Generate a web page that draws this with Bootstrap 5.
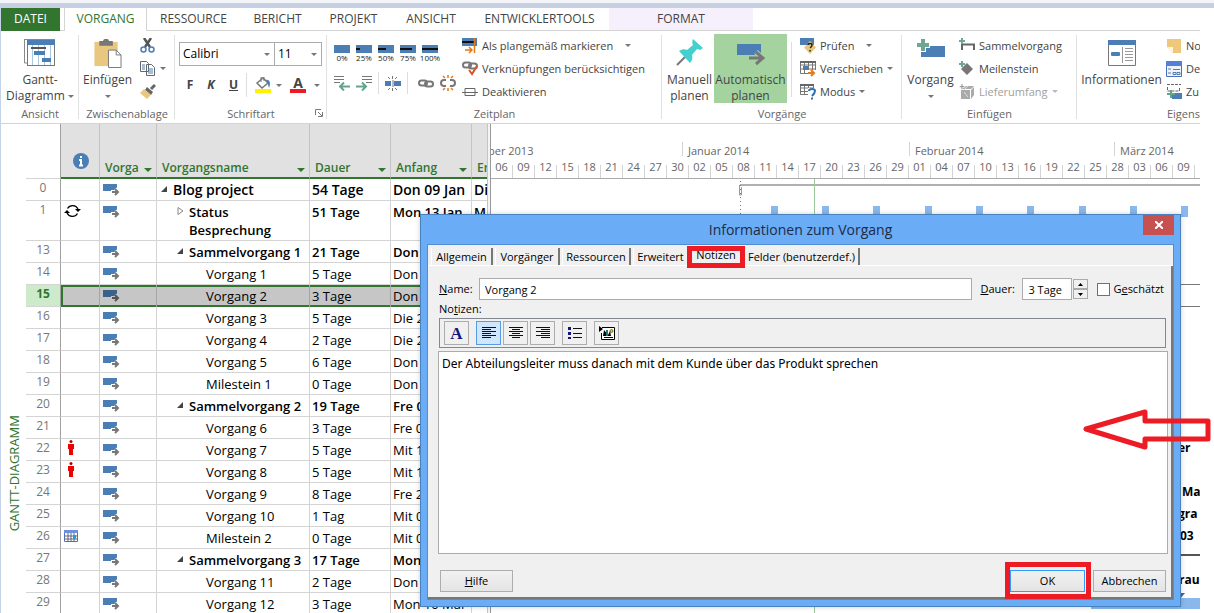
<!DOCTYPE html>
<html lang="de">
<head>
<meta charset="utf-8">
<meta name="viewport" content="width=device-width, initial-scale=1">
<title>Informationen zum Vorgang</title>
<link href="https://cdn.jsdelivr.net/npm/bootstrap@5.3.0/dist/css/bootstrap.min.css" rel="stylesheet">
<style>
:root{--ui:"Open Sans","Noto Sans",sans-serif;--green:#31752f;--blue:#4a7eb5;--line:#d4d4d4;--red:#ed1c24}
body{font-family:var(--ui);font-size:12px;line-height:16px;color:#444;background:#fff;height:100vh;overflow:hidden}
button,input,select,textarea{font-family:inherit;font-size:inherit;line-height:inherit;color:inherit}
button{background:none;border:0;padding:0;white-space:nowrap}
svg{display:block;flex:none}
a{color:inherit;text-decoration:none}
.topstrip{height:8px;background:#c7d0e2;border-top:3px solid #f3f5f8}
.app{margin-right:14px;border-left:1px solid #c5d3ea;min-height:0}
.tabbar{display:grid;grid-template-columns:59px 87px 93px 75px 77px 78px 139px 144px;height:23px;box-shadow:inset 0 -1px #d4d4d4}
.tabbar a{display:flex;align-items:center;justify-content:center;white-space:nowrap;padding-bottom:1px}
.tabbar .t-file{background:var(--green);color:#fff}
.tabbar .t-on{margin-left:4px;color:var(--green);background:#fff;border:1px solid var(--line);border-width:0 1px}
.tabbar .t-ctx{background:#f6f0fc;margin-bottom:1px}
.ribbon{display:grid;grid-template-columns:78px 96px 152px 335px 240px 175px minmax(0,1fr);height:93px;border-bottom:1px solid var(--line);overflow:hidden}
.grp{display:flex;flex-direction:column;position:relative;padding-top:3px;min-width:0;overflow:hidden}
.grp::after{content:"";position:absolute;right:0;top:4px;bottom:4px;width:1px;background:#e1e1e1}
.grp:last-child::after{display:none}
.grp-body{display:flex;height:73px}
.grp-name{text-align:center;color:#666;white-space:nowrap;font-size:11px;line-height:18px}
.bigbtn{display:flex;flex-direction:column;align-items:center;height:69px;padding-top:5px}
.bigbtn svg.pic{margin-bottom:6px}
.bigbtn .lbl{display:block;text-align:center;line-height:16px}
.car{display:inline-block;border:3px solid transparent;border-top-color:#777;border-bottom:0;vertical-align:middle}
.bigbtn .solo{margin-top:7px}
.linebtn{display:flex;align-items:center;gap:4px;height:23px;font-size:11px}
.linebtn .car{margin-left:5px}
.dis{color:#a0a0a0}
.vsep{width:1px;background:#ddd}
.fontbox{display:grid;border:1px solid #ababab;height:24px;background:#fff}
.fontbox>*{grid-area:1/1}
.fontbox select{appearance:none;border:0;background:none;padding:0 3px;color:#000;width:100%}
.fontbox .car{align-self:center;justify-self:end;margin-right:4px}
.pct{font-size:8px;line-height:10px;width:16px;display:flex;flex-direction:column;align-items:center;color:#222}
.side{width:25px;flex:none}
.side span{writing-mode:vertical-rl;transform:rotate(180deg);color:var(--green);margin-bottom:82px;font-size:13px}
.plan{width:461px;flex:none;overflow:hidden}
.plan table{table-layout:fixed;width:526px;border-collapse:separate;border-spacing:0;color:#000;font-size:13px;line-height:18px}
.plan th,.plan td{padding:0 0 0 2px;overflow:hidden;white-space:nowrap;vertical-align:top}
.plan thead th{height:55px;vertical-align:bottom;background:#e1e1e1;border-right:1px solid #c4c4c4;border-bottom:2px solid var(--green);color:var(--green);font-size:12px;font-weight:600;padding:0 4px 0 5px}
.plan thead th:first-child{background:#fff;border-right-color:#a0a0a0;border-bottom:1px solid var(--line)}
.plan thead .car{border-width:4px 4px 0;border-top-color:var(--green);margin-bottom:-4px}
.plan tbody td,.plan tbody th{height:22px;border-right:1px solid var(--line);border-bottom:1px solid var(--line);padding-top:2px}
.plan tbody th{font-weight:400;font-size:12px;color:#777;text-align:center;padding:0;border-right-color:#a0a0a0}
.plan td:nth-child(2),.plan td:nth-child(3){padding-left:3px}
.plan .r-first td{font-size:14px}
.plan .r-tall td,.plan .r-tall th{height:40px;white-space:normal}
.plan .r-sum td{font-weight:600}
.plan .l0{padding-left:4px}
.plan .s1{padding-left:20px}
.plan .s2{padding-left:49px}
.plan .r-sel td{background:#c6c6c6;border-right-color:#a5a5a5;box-shadow:inset 0 2px var(--green),inset 0 -2px var(--green);border-bottom:0}
.plan .r-sel td:nth-child(2){box-shadow:inset 2px 2px var(--green),inset 0 -2px var(--green)}
.plan .r-sel th{background:#cdebcb;color:var(--green);font-weight:700}
.tri{display:inline-block!important;margin-right:5px;vertical-align:2px}
.split{width:4px;flex:none;border-left:1px solid #c4c4c4;border-right:1px solid #999;background:#f4f4f4}
.gantt{position:relative;overflow:hidden;color:#666}
.scale{border-bottom:1px solid #aaa;height:55px;padding-top:18px;overflow:hidden;font-size:11px}
.months{display:grid;grid-template-columns:191px 227px 205px 1fr;height:23px;white-space:nowrap}
.months span{border-left:1px solid var(--line);padding-left:5px;line-height:18px;height:14px}
.months span:first-child{padding:0;border:0;margin-left:-3px}
.days{display:grid;grid-template-columns:repeat(33,22px);height:14px}
.days span{border-right:1px solid var(--line);text-align:center;line-height:4px;height:14px}
.canvas{position:absolute;inset:55px 0 0 0}
.dlg{position:absolute;left:420px;right:33px;top:214px;bottom:6px;background:#6bacf7;border:1px solid #4a82bd;padding:0 6px 6px;color:#000;box-shadow:0 0 5px #0003;font-size:11px}
.dlg-title{height:29px;padding-top:1px;font-size:14px;color:#1d2b45}
.dlg-close{position:absolute;right:6px;top:0;width:31px;height:20px;background:#c75050;color:#fff;display:grid;place-items:center}
.dlg-in{background:#f0f0f0;border:1px solid #4f8dd6;min-height:0}
.dtabs{height:21px;padding:3px 0 0 3px;border-bottom:1px solid #fff}
.dtabs button{height:17px;border-left:1px solid #fff;border-right:2px solid #777;text-align:center;padding-top:1px;line-height:14px}
.dtabs .g{margin-left:2px}
.mark-tab{border:5px solid var(--red)!important;height:22px!important;width:58px;margin-top:-2px;z-index:2;padding:0!important;line-height:8px!important;display:flex;justify-content:center}
.dbody{border-right:2px solid #777;border-bottom:2px solid #777;min-height:0;padding:12px 3px 0 11px}
.tb{height:22px;border:1px solid #ababab;background:#fff;padding:0 5px;border-radius:0;min-width:0}
.spin{display:grid;width:15px;height:20px;grid-template-rows:10px 10px}
.spin button{border:1px solid #aaa;display:grid;place-items:center}
.cb{appearance:none;width:13px;height:13px;border:1px solid #707070;background:#fff}
.tools{height:30px;border:1px solid #828790;padding:2px 4px;margin-right:2px}
.tools button{width:25px;height:24px;border:1px solid #adadad;display:grid;place-items:center;background:#f0f0f0}
.tools .on{background:#cfe6fc;border-color:#569de5}
.tools .nextset{margin-left:5px}
.memo{resize:none;border:1px solid #ababab;padding:4px 3px;font-family:"Noto Sans",sans-serif;font-size:12px;line-height:16px;border-radius:0;margin:3px 0 0 -1px;color:#000;display:block}
.pb{width:73px;height:22px;border:1px solid #adadad;background:linear-gradient(#f1f1f1,#e4e4e4)}
.pb.def{border-color:#3399ff;width:75px}
.mark-ok{border:5px solid var(--red);width:86px;height:37px;padding-top:3px;margin:-1px 2px -2px 0}
.below{margin-top:7px}
.arrow{position:absolute;right:3px;top:408px}
</style>
</head>
<body class="d-flex flex-column position-relative">
<svg width="0" height="0" class="position-absolute" aria-hidden="true">
 <symbol id="task" viewBox="0 0 17 12"><path fill="#4a7eb5" d="M0 0h14v7H0z"/><path d="M8 8h7M12 5l3 3-3 3" fill="none" stroke="#fff" stroke-width="4"/><path d="M9 8h6M12 5l3 3-3 3" fill="none" stroke="#777" stroke-width="2"/></symbol>
 <symbol id="tasksel" viewBox="0 0 17 12"><path fill="#3a628c" d="M0 0h14v7H0z"/><path d="M8 8h7M12 5l3 3-3 3" fill="none" stroke="#c6c6c6" stroke-width="4"/><path d="M9 8h6M12 5l3 3-3 3" fill="none" stroke="#555" stroke-width="2"/></symbol>
 <symbol id="open" viewBox="0 0 7 7"><path d="M6 0v6H0z" fill="#444"/></symbol>
 <symbol id="man" viewBox="0 0 6 15"><circle cx="3" cy="1.500" r="1.500" fill="#a00"/><path fill="#e00" d="M0 4h6v5H5v6H1V9H0z"/></symbol>
 <symbol id="lnk" viewBox="0 0 16 9"><g fill="none" stroke="#777" stroke-width="2"><rect x="1" y="1.500" width="8" height="5" rx="2.500"/><rect x="7" y="2.500" width="8" height="5" rx="2.500"/></g></symbol>
</svg>
<div class="topstrip flex-shrink-0"></div>
<div class="app d-flex flex-column flex-grow-1">
<nav class="tabbar flex-shrink-0" aria-label="Menüband">
 <a class="t-file" href="#">DATEI</a><a class="t-on" href="#">VORGANG</a><a href="#">RESSOURCE</a><a href="#">BERICHT</a><a href="#">PROJEKT</a><a href="#">ANSICHT</a><a href="#">ENTWICKLERTOOLS</a><a class="t-ctx" href="#">FORMAT</a>
</nav>
<div class="ribbon flex-shrink-0">
 <section class="grp">
  <div class="grp-body justify-content-center">
   <button class="bigbtn"><svg class="pic" width="31" height="27" viewBox="0 0 31 27"><path d="M.5 24V.5M0 .5h31M.5 24h3" stroke="#888" fill="none"/><rect x="3.500" y="1.500" width="27" height="25" fill="#fff" stroke="#777"/><path fill="#4a7eb5" d="M3 1h28v5H3z"/><path d="M8.500 6v20M14.500 6v20M20.500 6v20M26.500 6v20" stroke="#a9c8e4"/><path d="M7 9h15" stroke="#555" stroke-width="2"/><path fill="#4a7eb5" d="M10 12h11v4H10zM18 19h9v4h-9z"/></svg><span class="lbl">Gantt-<br>Diagramm <i class="car"></i></span></button>
  </div><div class="grp-name">Ansicht</div>
 </section>
 <section class="grp">
  <div class="grp-body ps-1">
   <button class="bigbtn"><svg class="pic mb-1" width="29" height="29" viewBox="0 0 29 30"><path fill="#eac77f" d="M1 3h24v25H1z"/><path fill="#777" d="M6 2h4c0-3 6-3 6 0h4v5H6z"/><path d="M15.500 11.500h8l5 5v13h-13z" fill="#fff" stroke="#777"/><path d="M23.500 11.500v5h5" fill="none" stroke="#777"/></svg><span class="lbl">Einfügen</span><i class="car solo"></i></button>
   <div class="d-flex flex-column gap-2 ps-1 pt-1 ms-1">
    <button aria-label="Ausschneiden"><svg width="16" height="15" viewBox="0 0 16 15"><path d="M4 0l6 9M11 0L5 9" stroke="#555" stroke-width="2.500"/><g fill="none" stroke="#4a7eb5" stroke-width="1.500"><circle cx="3.500" cy="11.500" r="2.500"/><circle cx="11.500" cy="11.500" r="2.500"/></g></svg></button>
    <button class="d-flex align-items-center gap-1" aria-label="Kopieren"><svg width="16" height="15" viewBox="0 0 16 15"><path d="M.5.500h6l2 2v8h-8zM6.500 3.500h5l3 3v8h-8z" fill="#fff" stroke="#666"/><path d="M2 4h3M2 6h3M2 8h3M8 8h5M8 10h5M8 12h5" stroke="#4a7eb5"/></svg><i class="car"></i></button>
    <button aria-label="Format übertragen"><svg width="16" height="15" viewBox="0 0 16 15"><path d="M15 1l-4 4" stroke="#666" stroke-width="3"/><path d="M7 3l6 5-2 3-6-5z" fill="#666"/><path d="M4 5l7 6-4 4-7-6z" fill="#eac77f"/></svg></button>
   </div>
  </div><div class="grp-name">Zwischenablage</div>
 </section>
 <section class="grp">
  <div class="grp-body flex-column ps-1">
   <div class="d-flex pt-2"><label class="fontbox" style="width:96px"><select aria-label="Schriftart"><option>Calibri</option></select><i class="car"></i></label><label class="fontbox border-start-0" style="width:47px"><select aria-label="Schriftgrad"><option>11</option></select><i class="car"></i></label></div>
   <div class="d-flex align-items-center" style="margin-top:7px;height:24px">
    <button class="fw-bold" style="width:22px">F</button><button class="fw-bold fst-italic" style="width:20px">K</button><button class="fw-bold text-decoration-underline" style="width:25px">U</button><span class="vsep h-100"></span>
    <button class="d-flex align-items-center gap-1 ms-2" aria-label="Füllfarbe"><svg width="17" height="16" viewBox="0 0 17 16"><path fill="#fff200" d="M0 12h16v4H0z"/><path d="M2 6l6-5 5 5-6 5z" fill="#fff" stroke="#777" stroke-width="1.500"/><path d="M6 5V0h3v4" fill="none" stroke="#777"/><path d="M11 3c4-1 5 4 3 8-1-3-1-5-3-8z" fill="#4a7eb5"/></svg><i class="car"></i></button>
    <button class="d-flex align-items-center gap-1 ms-2"><span class="fw-bold text-center" style="width:16px;border-bottom:4px solid #ed1c24;line-height:12px;font-size:14px">A</span><i class="car ms-1"></i></button>
   </div>
  </div><div class="grp-name d-flex justify-content-center">Schriftart<svg class="position-absolute end-0 me-1 mt-1" width="8" height="8"><path d="M.5 6V.5H6M3 3l4 4M7.500 3v4.500H3" fill="none" stroke="#777"/></svg></div>
 </section>
 <section class="grp">
  <div class="grp-body" style="padding-left:7px;gap:6px">
   <div style="width:122px">
    <div class="d-flex" style="gap:6px;padding-top:11px">
     <button class="pct"><svg width="16" height="8"><path fill="#4a7eb5" d="M0 0h16v8H0z"/></svg>0%</button>
     <button class="pct"><svg width="16" height="8"><path fill="#4a7eb5" d="M0 0h16v8H0z"/><path fill="#111" d="M0 3h4v2H0z"/></svg>25%</button>
     <button class="pct"><svg width="16" height="8"><path fill="#4a7eb5" d="M0 0h16v8H0z"/><path fill="#111" d="M0 3h8v2H0z"/></svg>50%</button>
     <button class="pct"><svg width="16" height="8"><path fill="#4a7eb5" d="M0 0h16v8H0z"/><path fill="#111" d="M0 3h12v2H0z"/></svg>75%</button>
     <button class="pct"><svg width="16" height="8"><path fill="#4a7eb5" d="M0 0h16v8H0z"/><path fill="#111" d="M0 3h16v2H0z"/></svg>100%</button>
    </div>
    <div class="d-flex align-items-center" style="margin-top:9px;height:22px;gap:6px">
     <button aria-label="Ausrücken"><svg width="16" height="16"><path d="M0 1.500h10M0 4.500h10M0 7.500h6" stroke="#777"/><path d="M16 11.500H6M10 7.500l-4 4 4 4" fill="none" stroke="#62a58b" stroke-width="2"/></svg></button>
     <button aria-label="Einrücken"><svg width="16" height="16"><path d="M6 1.500h10M6 4.500h10M10 7.500h6" stroke="#777"/><path d="M0 11.500h10M6 7.500l4 4-4 4" fill="none" stroke="#62a58b" stroke-width="2"/></svg></button>
     <span class="vsep h-100"></span>
     <button aria-label="Unterbrechen"><svg width="16" height="15"><path fill="#4a7eb5" d="M0 5h6v5H0zM9 5h7v5H9z"/><path d="M8 4v7M7.500 0v3M7.500 12v3M3 1l2 2M12 1l-2 2M3 14l2-2M12 14l-2-2" stroke="#777"/></svg></button>
     <span class="vsep h-100"></span>
     <button class="ms-1" aria-label="Verknüpfen"><svg width="16" height="9"><use href="#lnk"/></svg></button>
     <button aria-label="Verknüpfung aufheben"><svg width="16" height="16"><path d="M6 5H4Q1 5 1 8t3 3h2M10 5h2q3 0 3 3t-3 3h-2" fill="none" stroke="#777" stroke-width="2"/><path d="M8 0v3M8 13v3M3 1l2 2M13 1l-2 2M3 15l2-2M13 15l-2-2" stroke="#e67817" stroke-width="1.500"/></svg></button>
    </div>
   </div>
   <div>
    <button class="linebtn"><svg width="16" height="16"><path fill="#4a7eb5" d="M0 0h15v8H0z"/><path d="M0 4h12" stroke="#111" stroke-width="2"/><path d="M12.500 0v15M3 12h7M7 9l3 3-3 3" fill="none" stroke="#e67817" stroke-width="1.500"/></svg>Als plangemäß markieren <i class="car ms-2"></i></button>
    <button class="linebtn"><svg width="16" height="16"><use href="#lnk" width="16" height="9"/><path d="M7 9l3 4 5-8" fill="none" stroke="#d8532a" stroke-width="2"/></svg>Verknüpfungen berücksichtigen</button>
    <button class="linebtn"><svg width="16" height="16"><path d="M0 8.500h16M3 4.500h10v7H3z" fill="none" stroke="#666"/></svg>Deaktivieren</button>
   </div>
  </div><div class="grp-name">Zeitplan</div>
 </section>
 <section class="grp">
  <div class="grp-body">
   <button class="bigbtn" style="width:52px;padding-left:3px"><svg class="pic" width="28" height="27" viewBox="0 0 28 27"><path d="M1 26l9-9" stroke="#777" stroke-width="2"/><path fill="#45d0d0" d="M17 0l10 9-3 2-3-1-5 6c1 3 0 6-2 8L3 12c3-2 6-2 8-1l6-5c-1-2-1-4 0-6z"/></svg><span class="lbl">Manuell<br>planen</span></button>
   <button class="bigbtn" style="width:73px;background:#a5d3a0"><svg class="pic" width="28" height="27" viewBox="0 0 28 27"><path fill="#4a7eb5" d="M0 5h24v11H0z"/><path d="M12 19h14M19 13l7 6-7 6" fill="none" stroke="#a5d3a0" stroke-width="5"/><path d="M12 19h14M19 13l7 6-7 6" fill="none" stroke="#777" stroke-width="3"/></svg><span class="lbl">Automatisch<br>planen</span></button>
   <span class="vsep ms-1 me-2 mt-2 mb-2"></span>
   <div>
    <button class="linebtn"><svg width="16" height="16"><path fill="#4a7eb5" d="M0 0h14v7H0z"/><path fill="#eac77f" d="M10 3l6 6.500-6 6.500-6-6.500z"/><path d="M8 7q0-1.500 2-1.500t2 1.500-2 3M10 12v1.500" fill="none" stroke="#222" stroke-width="1.500"/></svg>Prüfen <i class="car ms-2"></i></button>
    <button class="linebtn"><svg width="16" height="16"><path d="M.5.500h15v12H.5zM.5 4h15M.5 8h15M4.500 1v12M8.500 1v12M12.500 1v12" fill="none" stroke="#777"/><path d="M0 1h16" stroke="#666" stroke-width="2"/><path fill="#4a7eb5" d="M3 5h5v4H3z"/><path fill="#fff" d="M8 9h8v7H8z"/><path d="M8 12h6M11 9l3 3-3 3" fill="none" stroke="#e67817" stroke-width="2"/></svg>Verschieben<i class="car ms-0"></i></button>
    <button class="linebtn"><svg width="16" height="16"><path d="M.5.500h13v10H.5zM.5 4h13M.5 7.500h13M4.500 1v10M8.500 1v10" fill="none" stroke="#777"/><path d="M0 1h14" stroke="#666" stroke-width="2"/><path fill="#fff" d="M8 4h8v12H8z"/><path d="M9 7q0-2 3-2t3 2-3 5M12 13.500v2" fill="none" stroke="#2f6eb0" stroke-width="2"/></svg>Modus<i class="car ms-0"></i></button>
   </div>
  </div><div class="grp-name">Vorgänge</div>
 </section>
 <section class="grp">
  <div class="grp-body">
   <button class="bigbtn" style="width:57px"><svg class="pic" width="28" height="27" viewBox="0 0 28 27"><path fill="#4a7eb5" d="M4 7h24v11H4z"/><path d="M6 0v13M0 6h13" stroke="#fff" stroke-width="6"/><path d="M6 0v12M0 6h12" stroke="#6fa792" stroke-width="4"/></svg><span class="lbl">Vorgang</span><i class="car solo"></i></button>
   <div>
    <button class="linebtn"><svg width="16" height="16"><path d="M3 12V6.500h12V12" fill="none" stroke="#666" stroke-width="2"/><path d="M3 0v6M0 3h6" stroke="#6fa792" stroke-width="2"/></svg>Sammelvorgang</button>
    <button class="linebtn"><svg width="16" height="16"><path fill="#777" d="M8 2l6 6-6 6-6-6z"/><path d="M3 0v6M0 3h6" stroke="#6fa792" stroke-width="2"/></svg>Meilenstein</button>
    <button class="linebtn dis"><svg width="16" height="16"><path fill="#aaa" d="M2 6h9v9H2zM3 5l4-3h8l-3 3zM12 6l3-3v8l-3 4z"/><path d="M5 6l4-4M5 8l4 5M3 0v6M0 3h6" stroke="#ddd"/><path d="M3 0v5M1 2.500h4" stroke="#999"/></svg>Lieferumfang<i class="car ms-0 opacity-50"></i></button>
   </div>
  </div><div class="grp-name">Einfügen</div>
 </section>
 <section class="grp">
  <div class="grp-body">
   <button class="bigbtn flex-shrink-0" style="width:89px"><svg class="pic" width="28" height="27" viewBox="0 0 28 27"><path d="M.5 1.500h27v25H.5z" fill="#fff" stroke="#777"/><path fill="#4a7eb5" d="M0 1h28v5H0z"/><rect x="3" y="13" width="9" height="4" rx="1" fill="#4a7eb5"/><path d="M14.500 8v16M17 9.500h8M17 12.500h8M17 15.500h8M17 18.500h8M17 21.500h8" stroke="#999"/></svg><span class="lbl">Informationen</span></button>
   <div>
    <button class="linebtn"><svg width="16" height="16"><path fill="#eec97c" d="M1 1h14v14H7l-6-6z"/><path d="M1 9h6v6" fill="#fff5de"/></svg>No</button>
    <button class="linebtn"><svg width="16" height="16"><path d="M.5.500h15v15H.5z" fill="#eef3fb" stroke="#4a6fc0"/><path fill="#5680d8" d="M0 0h16v5H0z"/><path d="M2 8h3M2 12h3M7 8.500h7M7 11.500h3v2H7zM11 11.500h3v2h-3z" stroke="#5b79a8" fill="none"/></svg>Det</button>
    <button class="linebtn"><svg width="16" height="16"><path d="M1 .500h14M1.500 3v4h12V3" fill="none" stroke="#666" stroke-dasharray="3 1"/><path fill="#4a7eb5" d="M6 9h10v6H6z"/><path d="M5 6v8M1 10h8" stroke="#62a58b" stroke-width="2"/></svg>Zu</button>
   </div>
  </div><div class="grp-name text-end">Eigens</div>
 </section>
</div>
<main class="d-flex flex-grow-1 overflow-hidden" style="min-height:0">
 <div class="side d-flex align-items-end justify-content-center"><span>GANTT-DIAGRAMM</span></div>
 <div class="plan">
 <table>
  <colgroup><col style="width:35px"><col style="width:39px"><col style="width:57px"><col style="width:153px"><col style="width:81px"><col style="width:81px"><col style="width:80px"></colgroup>
  <thead><tr><th></th><th><svg class="mx-auto mb-2" width="16" height="16"><circle cx="8" cy="8" r="8" fill="#4a7eb5"/><path d="M8 3v2M6 7h2v5M6 12.500h4" stroke="#fff" stroke-width="2" fill="none"/></svg></th><th><div class="d-flex justify-content-between align-items-center">Vorga<i class="car"></i></div></th><th><div class="d-flex justify-content-between align-items-center">Vorgangsname<i class="car"></i></div></th><th><div class="d-flex justify-content-between align-items-center">Dauer<i class="car"></i></div></th><th><div class="d-flex justify-content-between align-items-center">Anfang<i class="car"></i></div></th><th>En</th></tr></thead>
  <tbody id="rows"></tbody>
 </table>
 </div>
 <div class="split"></div>
 <div class="gantt flex-grow-1">
  <div class="scale"><div class="months"><span>ber 2013</span><span>Januar 2014</span><span>Februar 2014</span><span>März 2014</span></div><div class="days" id="days"></div></div>
  <svg class="canvas" width="100%" height="440" font-family="Open Sans, Noto Sans, sans-serif" font-size="12" font-weight="700">
   <path d="M249 6h460" stroke="#b0b0b0" stroke-width="2"/><path d="M248.500 6v10h2V8" fill="none" stroke="#999"/><path d="M249.500 2v34" stroke="#777" stroke-dasharray="1 3"/>
   <path d="M323.500 0v434" stroke="#9cc79a"/>
   <g fill="#8ab8ec" id="marks"></g>
   <path d="M600 105.500h109M600 127.500h109" stroke="#777"/><path d="M600 376h109" stroke="#555" stroke-width="2"/>
   <g fill="#000"><text x="687" y="273">er</text><text x="691" y="317">Ma</text><text x="687" y="339">gra</text><text x="689" y="361">03</text><text x="688" y="405">rau</text></g>
   <path fill="#2f6eb0" d="M689 414h5l-5 6z"/><path fill="#8ab8ec" d="M600 419h110v11H600z"/>
  </svg>
 </div>
</main>
</div>

<div class="dlg d-flex flex-column" role="dialog" aria-label="Informationen zum Vorgang">
 <div class="dlg-title d-flex justify-content-center align-items-center flex-shrink-0">Informationen zum Vorgang</div>
 <button class="dlg-close" aria-label="Schließen"><svg width="8" height="8"><path d="M0 0l8 8M8 0L0 8" stroke="#fff" stroke-width="2"/></svg></button>
 <div class="dlg-in d-flex flex-column flex-grow-1">
  <div class="dtabs d-flex flex-shrink-0"><button style="width:62px">Allgemein</button><button class="g" style="width:65px">Vorgänger</button><button class="g" style="width:69px">Ressourcen</button><button class="g border-end-0" style="width:54px">Erweitert</button><button class="mark-tab">Notizen</button><button class="border-start-0" style="width:115px">Felder (benutzerdef.)</button></div>
  <div class="dbody d-flex flex-column flex-grow-1">
   <div class="d-flex align-items-center" style="margin-right:4px"><label for="nm" style="width:40px"><u>N</u>ame:</label><input id="nm" class="tb flex-grow-1" value="Vorgang 2"><label for="du" style="width:50px;padding-left:8px"><u>D</u>auer:</label><input id="du" class="tb" style="width:50px" value="3 Tage"><span class="spin" style="margin-left:1px"><button aria-label="Mehr"><svg width="5" height="3"><path d="M0 3l2.500-3L5 3z"/></svg></button><button aria-label="Weniger"><svg width="5" height="3"><path d="M0 0l2.500 3L5 0z"/></svg></button></span><input type="checkbox" id="ge" class="cb" style="margin:0 3px 0 9px"><label for="ge">G<u>e</u>schätzt</label></div>
   <label for="memo" style="height:18px;line-height:18px">No<u>t</u>izen:</label>
   <div class="tools d-flex flex-shrink-0" style="gap:2px">
    <button aria-label="Zeichenformat" style="font:bold 17px/17px 'Liberation Serif',serif;color:#15157a">A</button>
    <button class="on nextset" aria-label="Linksbündig"><svg width="14" height="12"><path d="M0 .500h14M0 2.500h9M0 4.500h14M0 6.500h9M0 8.500h14M0 10.500h9" stroke="#111"/></svg></button>
    <button aria-label="Zentriert"><svg width="14" height="12"><path d="M0 .500h14M3 2.500h8M0 4.500h14M3 6.500h8M0 8.500h14M3 10.500h8" stroke="#111"/></svg></button>
    <button aria-label="Rechtsbündig"><svg width="14" height="12"><path d="M0 .500h14M5 2.500h9M0 4.500h14M5 6.500h9M0 8.500h14M5 10.500h9" stroke="#111"/></svg></button>
    <button class="nextset" aria-label="Aufzählung"><svg width="14" height="12"><path fill="#15157a" d="M0 0h3v3H0zM0 5h3v3H0zM0 10h3v3H0z"/><path d="M5 1.500h9M5 6.500h9M5 10.500h9" stroke="#111"/></svg></button>
    <button class="nextset" aria-label="Objekt einfügen"><svg width="16" height="14"><path d="M3 1.500h12.500v12H2.500V7" fill="#fff" stroke="#000"/><path d="M0 0l4 3-4 3z"/><path d="M5 4l4 5 2-4 1 5H4zM5 11h9v1H5z"/><circle cx="12.500" cy="5" r="1.500" fill="#dd0" stroke="#000" stroke-width=".5"/><path fill="#277" d="M7 4h2v6H7z"/></svg></button>
   </div>
   <textarea id="memo" class="memo flex-grow-1" spellcheck="false">Der Abteilungsleiter muss danach mit dem Kunde über das Produkt sprechen</textarea>
   <div class="d-flex align-items-start flex-shrink-0" style="padding:9px 2px 0 1px"><button class="pb me-auto below"><u>H</u>ilfe</button><div class="mark-ok"><button class="pb def">OK</button></div><button class="pb below">Abbrechen</button></div>
  </div>
 </div>
</div>
<svg class="arrow" width="128" height="42" viewBox="0 0 128 42"><path d="M3 21L62 4v9h63v18H62v8z" fill="none" stroke="#ed1c24" stroke-width="5" stroke-linejoin="round"/></svg>
<script>
// id, indicator icon, name, duration, start, finish, row class, outline level
const tasks=[
[0,'','Blog project','54 Tage','Don 09 Jan','Di','r-first r-sum',0],
[1,'rep','Status Besprechung','51 Tage','Mon 13 Jan','M','r-tall r-sum',1],
[13,'','Sammelvorgang 1','21 Tage','Don','','r-sum',1],
[14,'','Vorgang 1','5 Tage','Don','','',2],
[15,'','Vorgang 2','3 Tage','Don','','r-sel',2],
[16,'','Vorgang 3','5 Tage','Die 2','','',2],
[17,'','Vorgang 4','2 Tage','Die 2','','',2],
[18,'','Vorgang 5','6 Tage','Don','','',2],
[19,'','Milestein 1','0 Tage','Don','','',2],
[20,'','Sammelvorgang 2','19 Tage','Fre 0','','r-sum',1],
[21,'','Vorgang 6','3 Tage','Fre 0','','',2],
[22,'man','Vorgang 7','5 Tage','Mit 1','','',2],
[23,'man','Vorgang 8','5 Tage','Mit 1','','',2],
[24,'','Vorgang 9','8 Tage','Fre 2','','',2],
[25,'','Vorgang 10','1 Tag','Mit 0','','',2],
[26,'cal','Milestein 2','0 Tage','Mit 0','','',2],
[27,'','Sammelvorgang 3','17 Tage','Mon','','r-sum',1],
[28,'','Vorgang 11','2 Tage','Don','','',2],
[29,'','Vorgang 12','3 Tage','Mon 10 Mär','','',2]];
const ico={'':'',
rep:'<svg width="17" height="14" style="margin-top:1px"><path d="M3.500 4.500a6 6 0 0 1 10.500 .500M13.500 9.500a6 6 0 0 1-10.500-.500" fill="none" stroke="#000" stroke-width="1.300"/><path d="M11 5h6l-3 3zM0 9h6L3 6z"/></svg>',
man:'<svg width="6" height="15" style="margin:-1px 0 0 4px"><use href="#man"/></svg>',
cal:'<svg width="14" height="13" style="margin-top:1px"><path d="M.5.500h13v11H.5z" fill="#fff" stroke="#5b6fa8"/><path fill="#6d8fe0" d="M0 0h14v3H0z"/><path d="M1 6h12M1 9h12M4 3v9M7 3v9M10 3v9" stroke="#667"/><path fill="#19a0e8" d="M9 5h3v4H9z"/></svg>'};
document.getElementById('rows').innerHTML=tasks.map(([id,ic,name,d,a,e,c,l])=>{
 const tri=l==2?'':id==1?'<svg class="tri" width="7" height="8"><path d="M1 .500l5 3.500-5 3.500z" fill="#fff" stroke="#888"/></svg>':'<svg class="tri" width="7" height="7"><use href="#open"/></svg>';
 const body=id==1?`<div class="d-flex align-items-start"><span>${tri}</span><span>${name.replace(' ','<br>')}</span></div>`:tri+name;
 return `<tr class="${c}"><th scope="row">${id}</th><td>${ico[ic]}</td><td><svg width="17" height="12" style="margin-top:3px"><use href="#${c=='r-sel'?'tasksel':'task'}"/></svg></td><td class="${['l0','s1','s2'][l]}">${body}</td><td>${d}</td><td>${a}</td><td>${e}</td></tr>`}).join('');
document.getElementById('days').innerHTML='06 09 12 15 18 21 24 27 30 02 05 08 11 14 17 20 23 26 29 01 04 07 10 13 16 19 22 25 28 03 06 09'.split(' ').map(d=>`<span>${d}</span>`).join('');
document.getElementById('marks').innerHTML=[280,331,382,434,485,536,588,639,690].map(x=>`<rect x="${x}" y="27" width="7" height="11"/>`).join('');
</script>
<script src="https://cdn.jsdelivr.net/npm/bootstrap@5.3.0/dist/js/bootstrap.bundle.min.js"></script>
</body>
</html>
